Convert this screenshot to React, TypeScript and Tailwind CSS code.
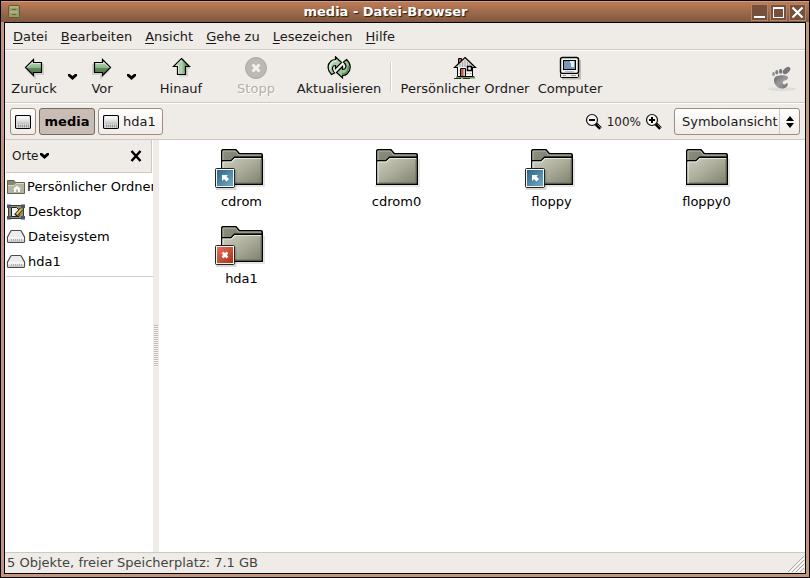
import React from 'react'

const menus = ['Datei', 'Bearbeiten', 'Ansicht', 'Gehe zu', 'Lesezeichen', 'Hilfe']

const files = [
  { name: 'cdrom', emblem: 'link' },
  { name: 'cdrom0', emblem: '' },
  { name: 'floppy', emblem: 'link' },
  { name: 'floppy0', emblem: '' },
  { name: 'hda1', emblem: 'denied' },
]

// shared gradients
function Defs() {
  return (
    <svg width="0" height="0" className="absolute">
      <defs>
        <linearGradient id="green" x1="0" y1="0" x2="0" y2="1">
          <stop offset="0.2" stopColor="#b4d2b0" />
          <stop offset="0.5" stopColor="#8fb68c" />
          <stop offset="0.55" stopColor="#5f8a5c" />
          <stop offset="1" stopColor="#47703f" />
        </linearGradient>
        <linearGradient id="greenUp" x1="0" y1="0" x2="1" y2="0">
          <stop offset="0.2" stopColor="#a5c8a1" />
          <stop offset="0.5" stopColor="#b4d2b0" />
          <stop offset="0.8" stopColor="#5f8a5c" />
        </linearGradient>
        <linearGradient id="front" x1="0" y1="0" x2="1" y2="1">
          <stop offset="0" stopColor="#cfcfc0" />
          <stop offset="0.5" stopColor="#aaac99" />
          <stop offset="1" stopColor="#7c7f6b" />
        </linearGradient>
        <linearGradient id="back" x1="0" y1="0" x2="1" y2="1">
          <stop offset="0" stopColor="#8e917f" />
          <stop offset="1" stopColor="#5f624f" />
        </linearGradient>
        <linearGradient id="blue" x1="0" y1="0" x2="1" y2="1">
          <stop offset="0" stopColor="#2a6787" />
          <stop offset="1" stopColor="#74a9c2" />
        </linearGradient>
        <linearGradient id="red" x1="0" y1="0" x2="1" y2="1">
          <stop offset="0" stopColor="#e8705a" />
          <stop offset="1" stopColor="#a8321c" />
        </linearGradient>
        <linearGradient id="metal" x1="0" y1="0" x2="0" y2="1">
          <stop offset="0" stopColor="#ffffff" />
          <stop offset="1" stopColor="#c4c4c4" />
        </linearGradient>
        <linearGradient id="gray" x1="0" y1="0" x2="1" y2="1">
          <stop offset="0" stopColor="#666666" />
          <stop offset="0.5" stopColor="#9a9a9a" />
          <stop offset="1" stopColor="#6e6e6e" />
        </linearGradient>
      </defs>
    </svg>
  )
}

function ArrowIcon({ dir }: { dir: 'left' | 'right' }) {
  return (
    <svg width="24" height="24" viewBox="0 0 24 24">
      <g transform={dir === 'right' ? 'translate(24 0) scale(-1 1)' : undefined}>
        <path d="M5 14 13 21.500V18H21V8" fill="none" stroke="#000" strokeOpacity="0.12" strokeWidth="2" />
        <path d="M3.500 11.500 11.500 3.500V6.500H19.500V16.500H11.500V19.500Z" fill="url(#green)" stroke="#000" strokeWidth="1.200" />
        <path d="M5 11.500 10.500 6V7.500H18.500" fill="none" stroke="#d5e6d2" />
      </g>
    </svg>
  )
}

function UpIcon() {
  return (
    <svg width="24" height="24" viewBox="0 0 24 24">
      <path d="M10 19.500H18V12H21" fill="none" stroke="#000" strokeOpacity="0.12" strokeWidth="2" />
      <path d="M12.500 2.500 20.500 10.500H16.500V18.500H8.500V10.500H4.500Z" fill="url(#greenUp)" stroke="#000" strokeWidth="1.200" />
      <path d="M12.500 4 7 9.500H9.500V17.500" fill="none" stroke="#d5e6d2" />
    </svg>
  )
}

function StopIcon() {
  return (
    <svg width="24" height="24" viewBox="0 0 24 24">
      <circle cx="12" cy="12" r="10.500" fill="#bcb8b4" stroke="#a9a5a1" />
      <path d="M8.500 8.500 15.500 15.500M15.500 8.500 8.500 15.500" stroke="#f4f1ee" strokeWidth="3" />
    </svg>
  )
}

function ReloadIcon() {
  return (
    <svg width="24" height="24" viewBox="0 0 24 24">
      <path
        d="M4.500 18.500C0 14 0 8.500 4 5C5.500 3.500 7 3.500 8.500 3.500V.8L14.500 6.500 8.500 12.500V9.500C5.500 9.500 4.500 12.500 6.500 15.500L7.500 17Z"
        fill="#a9cda8"
        stroke="#000"
        strokeWidth="1.200"
      />
      <path d="M3 13.500C2 9 5 5 9.500 5" fill="none" stroke="#dcebd9" strokeWidth="1.500" />
      <path
        d="M19.500 3.500C24 7.500 24.500 13.500 20.500 17.500C19 19 17 19.500 15.500 19.500V22L9.500 16.500 15.500 10.500V13.500C19 13.500 20 10 17.500 7L16.500 6Z"
        fill="#9ac398"
        stroke="#000"
        strokeWidth="1.200"
      />
      <path d="M21.500 9.500C22 14 19.500 18 15 18" fill="none" stroke="#5f8a5c" strokeWidth="1.500" />
    </svg>
  )
}

function HomeIcon() {
  return (
    <svg width="24" height="24" viewBox="0 0 24 24">
      <path d="M3 21.500H22" stroke="#6d9160" strokeWidth="2" />
      <path d="M1 22.500H19M5 20.500H23" stroke="#263c20" strokeDasharray="7 2" />
      <path d="M4.500 11H19.500V20.500H4.500Z" fill="#f4f4f2" stroke="#000" />
      <path d="M5.500 2.500H8.500V8H5.500Z" fill="#c75a4c" stroke="#000" />
      <path d="M12 1.500 22.500 11.500H1.500Z" fill="#dedede" stroke="#000" strokeWidth="1.200" />
      <path d="M12 4V11M9.500 6V11M14.500 6V11M7 8V11M17 8V11" stroke="#a4a4a4" />
      <path d="M5 11.500H19" stroke="#f4f4f2" />
      <path d="M5.500 14.500H19M5.500 17.500H19" stroke="#c9c9c9" />
      <path d="M7.500 12.500H12.500V20.500H7.500Z" fill="#d9cfca" stroke="#000" />
      <path d="M8 13H10.500V20H8Z" fill="#c75a4c" />
      <path d="M14.500 10.500H18.500V14.500H14.500Z" fill="#fff" stroke="#000" strokeWidth="1.500" />
    </svg>
  )
}

function ComputerIcon() {
  return (
    <svg width="24" height="24" viewBox="0 0 24 24">
      <path d="M22 4V22.500H4" fill="none" stroke="#000" strokeOpacity="0.2" strokeWidth="2" />
      <rect x="2.500" y="1.500" width="18" height="16" rx="2" fill="#f3f3f1" stroke="#000" strokeWidth="1.400" />
      <rect x="5.500" y="4.500" width="12" height="9" fill="#7896b8" stroke="#000" />
      <path d="M12 5H16V11H13V7H12Z" fill="#e7eef5" />
      <path d="M7 15.500H16" stroke="#bbb" />
      <rect x="2.500" y="17.500" width="18" height="4" rx="1" fill="#eeeeec" stroke="#000" />
      <path d="M5 19.500H8M13 19.500H18" stroke="#999" />
    </svg>
  )
}

function FootIcon() {
  return (
    <svg width="30" height="30" viewBox="0 0 30 30">
      <ellipse cx="15" cy="25" rx="14" ry="2" fill="#000" opacity="0.06" />
      <path
        d="M7.500 14C9 11 18 10.500 20.500 12.500C22 14.500 20 16 17.500 16.500C15 17.500 15 20 17.500 20.500C18.500 20.500 19 19 20.500 19C21.500 22 18.500 25 14.500 24.500C9 24 5.500 18 7.500 14Z"
        fill="url(#gray)"
      />
      <ellipse cx="6.500" cy="10" rx="1.300" ry="2" fill="#8c8c8c" />
      <ellipse cx="9.800" cy="8.300" rx="1.500" ry="2.300" fill="#808080" />
      <ellipse cx="13.600" cy="7.200" rx="1.600" ry="2.500" fill="#777" />
      <ellipse cx="19.500" cy="6.500" rx="4.500" ry="2.600" fill="#777" transform="rotate(-42 19.500 6.500)" />
    </svg>
  )
}

function Chevron() {
  return (
    <svg width="9" height="6" viewBox="0 0 9 6">
      <path d="M0 0H2L4.500 2 7 0H9V2L4.500 6 0 2Z" fill="#000" />
    </svg>
  )
}

function DiskIcon() {
  return (
    <svg width="16" height="16" viewBox="0 0 16 16">
      <rect x="0.500" y="1.500" width="15" height="13" rx="1.500" fill="#f6f6f6" stroke="#000" strokeWidth="1.200" />
      <path d="M2 3H14V10H2Z" fill="url(#metal)" />
      <path d="M1.500 10.500H14.500V13.500H1.500Z" fill="#c8c8c8" />
      <path d="M3 12H14" stroke="#999" strokeWidth="3" strokeDasharray="1 1" />
    </svg>
  )
}

function DriveIcon() {
  return (
    <svg width="20" height="16" viewBox="0 0 20 16" className="shrink-0">
      <path
        d="M1.500 8 4.500 2.500Q5 1.500 6 1.500H14Q15 1.500 15.500 2.500L18.500 8V12.500Q18.500 13.500 17 13.500H3Q1.500 13.500 1.500 12.500Z"
        fill="#ececec"
        stroke="#4a4a4a"
        strokeWidth="1.200"
      />
      <path d="M2 8.500H18V12Q18 13 16.500 13H3.500Q2 13 2 12Z" fill="url(#metal)" />
      <path d="M5 11H16" stroke="#b0b0b0" strokeWidth="2" strokeDasharray="1 1" />
    </svg>
  )
}

function HomeFolderIcon() {
  return (
    <svg width="20" height="16" viewBox="0 0 20 16" className="shrink-0">
      <path d="M1.500 14.500V1.500H8L9.500 3.500H18.500V14.500Z" fill="#858876" stroke="#62644f" />
      <path d="M2 14V6.500H8L10 4.500H18V14Z" fill="#b3b5a2" />
      <path d="M2 6.500H8L10 4.500H18" fill="none" stroke="#d8d9cc" />
      <path d="M11 6.500 15 10H14V13H12V10.500H10V13H8V10H7Z" fill="#f6f6f2" />
    </svg>
  )
}

function DesktopIcon() {
  return (
    <svg width="20" height="16" viewBox="0 0 20 16" className="shrink-0">
      <rect x="2.500" y="1.500" width="15" height="13" fill="#8e917c" stroke="#3a3c32" />
      <path d="M1 .5H5V4H1ZM15 .5H19V4H15ZM1 12H5V15.500H1ZM15 12H19V15.500H15Z" fill="#4c5668" />
      <path d="M5.500 3.500H10.500L13 6V12.500H5.500Z" fill="#f4f4f0" stroke="#222" />
      <path d="M9.500 11.500 15.500 5" stroke="#222" strokeWidth="3.500" />
      <path d="M10.500 10.500 15.500 5" stroke="#f0c23c" strokeWidth="2" />
    </svg>
  )
}

function FolderIcon({ emblem }: { emblem: string }) {
  return (
    <svg width="55" height="48" viewBox="0 0 55 48">
      <path d="M6 40H50V13" fill="none" stroke="#000" strokeOpacity="0.1" strokeWidth="2" />
      <path d="M7.700 38V5Q7.700 3.700 9 3.700H22L25.500 7.700H47Q48.300 7.700 48.300 9V38Z" fill="url(#back)" stroke="#000" strokeWidth="1.400" />
      <path d="M9 14V5H21.500L24.500 9H47" fill="none" stroke="#b4b6a6" />
      <path d="M7.700 38.300V14.700H17L20.500 11.200H48.300V38.300Z" fill="url(#front)" stroke="#000" strokeWidth="1.400" />
      <path d="M9 37.500V16H17.500L21 12.500H47" fill="none" stroke="#e4e4d9" strokeWidth="1.200" />
      <path d="M47 13.500V37H10" fill="none" stroke="#6d705b" />
      {emblem && (
        <g>
          <path d="M2 43H21.500V24" fill="none" stroke="#000" strokeOpacity="0.15" strokeWidth="2" />
          <rect x="1.500" y="22.500" width="19" height="19" rx="1" fill="#f5f5f5" stroke="#222" />
          <rect x="3" y="24" width="16" height="16" fill={emblem === 'link' ? 'url(#blue)' : 'url(#red)'} />
        </g>
      )}
      {emblem === 'link' && <path d="M8 29H14L12.500 30.500 15 33 12.500 35.500 10 33 8 35Z" fill="#fff" />}
      {emblem === 'denied' && <path d="M8.500 29.500 13.500 34.500M13.500 29.500 8.500 34.500" stroke="#fff" strokeWidth="2.500" />}
    </svg>
  )
}

function ZoomIcon({ plus }: { plus?: boolean }) {
  return (
    <svg width="18" height="18" viewBox="0 0 18 18">
      <path d="M10.500 10.500 15.500 15.500" stroke="#000" strokeWidth="3.500" />
      <path d="M12.500 11.500 16 15" stroke="#777" strokeWidth="1" />
      <circle cx="7" cy="7" r="5.500" fill="#f4f4f2" stroke="#111" strokeWidth="1.200" />
      <path d={plus ? 'M4 7H10M7 4V10' : 'M4 7H10'} stroke="#000" strokeWidth="2" />
    </svg>
  )
}

function ToolButton({
  label,
  width,
  disabled,
  children,
}: {
  label: string
  width: string
  disabled?: boolean
  children: React.ReactNode
}) {
  return (
    <button
      disabled={disabled}
      className={`flex shrink-0 flex-col items-center leading-[17px] whitespace-nowrap ${width} ${
        disabled ? 'text-[#b5afa9] [text-shadow:1px_1px_0_white]' : ''
      }`}
    >
      {children}
      <span>{label}</span>
    </button>
  )
}

const windowButton =
  'flex size-[17px] items-center justify-center border border-[#b38468] bg-[#75503c]'
const pathButton =
  'flex h-[27px] items-center gap-1 rounded-[3px] border border-[#a08c7c] bg-linear-to-b from-white to-[#f0ece8] px-1'

export default function App() {
  return (
    <div className="flex h-screen flex-col border border-black bg-[#c3957a] font-['DejaVu_Sans',sans-serif] text-[13px] leading-4 text-[#1a1a1a]">
      <Defs />
      <header className="flex h-[21px] shrink-0 items-center border-t border-[#d99a75] bg-linear-to-b from-[#bd7c57] to-[#80583f] pr-[3px] pl-[7px]">
        <svg width="12" height="16" viewBox="0 0 12 16">
          <rect x="0.500" y="1.500" width="11" height="12" rx="1" fill="#999b69" stroke="#5c5d3c" />
          <path d="M2 3H10M2 8H10" stroke="#c5c694" />
          <path d="M4 5.500H8M4 10.500H8" stroke="#66683a" />
        </svg>
        <h1 className="flex-1 text-center font-bold text-white [text-shadow:1px_1px_1px_#2b1a10]">media - Datei-Browser</h1>
        <div className="flex gap-0.5">
          <button aria-label="Minimieren" className={windowButton}>
            <svg width="13" height="13">
              <path d="M1 11H12" stroke="#fff" strokeWidth="2" />
            </svg>
          </button>
          <button aria-label="Maximieren" className={windowButton}>
            <svg width="13" height="13">
              <path d="M1.500 1V12M1 11.500H12M11.500 1V12" stroke="#fff" />
              <path d="M1 2H12" stroke="#fff" strokeWidth="2" />
            </svg>
          </button>
          <button aria-label="Schließen" className={windowButton}>
            <svg width="13" height="13">
              <path d="M1.500 1.500 11.500 11.500M11.500 1.500 1.500 11.500" stroke="#fff" strokeWidth="2.200" />
            </svg>
          </button>
        </div>
      </header>

      <div className="mx-[3px] mb-[3px] flex min-h-0 flex-1 flex-col border border-black bg-[#efebe7]">
        <nav className="flex h-[27px] shrink-0 items-center gap-[13px] border-b border-[#cfc8c0] px-2 pt-px">
          {menus.map((m) => (
            <button key={m}>
              <span className="underline underline-offset-2">{m[0]}</span>
              {m.slice(1)}
            </button>
          ))}
        </nav>

        {/* Toolbar */}
        <div className="flex h-[53px] shrink-0 items-center border-t border-b border-t-white border-b-[#cfc8c0]">
          <ToolButton label="Zurück" width="w-[58px]">
            <ArrowIcon dir="left" />
          </ToolButton>
          <button aria-label="Zurück-Verlauf" className="flex w-[19px] justify-center">
            <Chevron />
          </button>
          <ToolButton label="Vor" width="w-10">
            <ArrowIcon dir="right" />
          </ToolButton>
          <button aria-label="Vor-Verlauf" className="flex w-[19px] justify-center">
            <Chevron />
          </button>
          <ToolButton label="Hinauf" width="w-20">
            <UpIcon />
          </ToolButton>
          <ToolButton label="Stopp" width="w-[70px]" disabled>
            <StopIcon />
          </ToolButton>
          <ToolButton label="Aktualisieren" width="w-24">
            <ReloadIcon />
          </ToolButton>
          <div className="mr-1 ml-[3px] h-[30px] w-0.5 border-r border-l border-l-[#d8cfc8] border-r-white" />
          <ToolButton label="Persönlicher Ordner" width="w-[138px]">
            <HomeIcon />
          </ToolButton>
          <ToolButton label="Computer" width="w-[72px]">
            <ComputerIcon />
          </ToolButton>
          <div className="mt-1 mr-2 ml-auto">
            <FootIcon />
          </div>
        </div>

        {/* Location bar */}
        <div className="flex h-[37px] shrink-0 items-center gap-[3px] border-t border-b border-t-white border-b-[#cfc8c0] px-[5px]">
          <button aria-label="Dateisystem" className={pathButton}>
            <DiskIcon />
          </button>
          <button className="h-[27px] w-14 rounded-[3px] border border-[#756a62] bg-[#c8bcb4] font-bold text-black">media</button>
          <button className={`${pathButton} pr-1.5`}>
            <DiskIcon />
            hda1
          </button>
          <div className="ml-auto flex items-center gap-1">
            <button aria-label="Verkleinern">
              <ZoomIcon />
            </button>
            <span className="text-xs">100%</span>
            <button aria-label="Vergrößern">
              <ZoomIcon plus />
            </button>
          </div>
          <div className="relative ml-2">
            <select
              aria-label="Ansicht"
              className="block h-[27px] w-[126px] appearance-none rounded-[3px] border border-[#a08c7c] bg-linear-to-b from-white to-[#f0ece8] pl-[7px]"
            >
              <option>Symbolansicht</option>
              <option>Listenansicht</option>
            </select>
            <div className="pointer-events-none absolute inset-y-px right-px flex w-5 items-center justify-center border-l border-[#cfc5bd]">
              <svg width="8" height="12" viewBox="0 0 8 12">
                <path d="M4 0 8 5H0ZM4 12 8 7H0Z" fill="#000" />
              </svg>
            </div>
          </div>
        </div>

        <div className="flex min-h-0 flex-1">
          <aside className="w-[148px] shrink-0 overflow-hidden bg-white pl-px">
            <div className="mr-px flex h-[33px] items-center justify-between border-r border-b border-[#cfc8c0] bg-[#efebe7] pr-2 pl-1.5">
              <button className="flex items-center gap-0.5 text-xs">
                Orte
                <Chevron />
              </button>
              <button aria-label="Seitenleiste schließen">
                <svg width="14" height="14" viewBox="0 0 14 14">
                  <path d="M2.500 2 11.500 12M11.500 2 2.500 12" stroke="#000" strokeWidth="2.500" />
                </svg>
              </button>
            </div>
            <ul className="border-b border-[#d8cfc8] pt-px pb-0.5 text-black">
              <li className="flex h-[25px] items-center gap-px whitespace-nowrap">
                <HomeFolderIcon />
                Persönlicher Ordner
              </li>
              <li className="flex h-[25px] items-center gap-0.5">
                <DesktopIcon />
                Desktop
              </li>
              <li className="flex h-[25px] items-center gap-0.5">
                <DriveIcon />
                Dateisystem
              </li>
              <li className="flex h-[25px] items-center gap-0.5">
                <DriveIcon />
                hda1
              </li>
            </ul>
          </aside>

          <div className="flex w-1.5 shrink-0 items-center justify-center bg-[#efebe7]">
            <div className="h-[42px] w-1 bg-[repeating-linear-gradient(to_bottom,#c2b6ad_0_1px,#fbf9f7_1px_2px)]" />
          </div>

          <main className="grid flex-1 auto-rows-[77px] grid-cols-[repeat(auto-fill,155px)] content-start overflow-hidden bg-white pt-1.5 pl-[5px] text-black">
            {files.map((f) => (
              <div key={f.name} className="flex flex-col items-center">
                <FolderIcon emblem={f.emblem} />
                <span>{f.name}</span>
              </div>
            ))}
          </main>
        </div>

        <footer className="flex h-[21px] shrink-0 items-center justify-between border-t border-[#cfc8c0] pl-0.5 text-[#444]">
          <span>5 Objekte, freier Speicherplatz: 7.1 GB</span>
          <svg width="18" height="18" viewBox="0 0 18 18" className="self-end">
            <path d="M1 17 17 1M5 17 17 5M9 17 17 9M13 17 17 13" stroke="#b5aaa2" />
            <path d="M3 17 17 3M7 17 17 7M11 17 17 11" stroke="#fff" />
          </svg>
        </footer>
      </div>
    </div>
  )
}
